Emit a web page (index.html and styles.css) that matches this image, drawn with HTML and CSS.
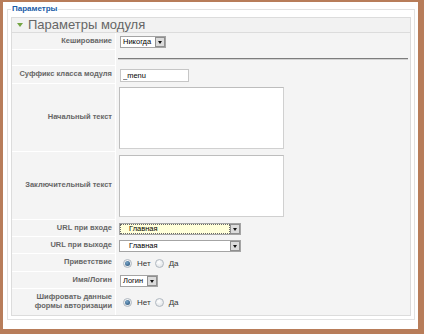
FILE: index.html
```html
<!DOCTYPE html>
<html lang="ru">
<head>
    <meta charset="UTF-8">
    <title>Параметры</title>
    <link rel="stylesheet" href="styles.css">
</head>
<body>
    <div class="frame">
        <fieldset class="params">
            <legend>Параметры</legend>
            <div class="pane">
                <h3 class="pane-title"><span class="toggler"></span>Параметры модуля</h3>
                <div class="paramlist">
                    <div class="param">
                        <div class="key">Кеширование</div>
                        <div class="value">
                            <div class="select select-cache"><span class="select-text">Никогда</span><span class="select-btn"></span></div>
                        </div>
                    </div>
                    <div class="param">
                        <div class="key"></div>
                        <div class="value"><hr class="spacer"></div>
                    </div>
                    <div class="param">
                        <div class="key">Суффикс класса модуля</div>
                        <div class="value"><input class="text" type="text" value="_menu"></div>
                    </div>
                    <div class="param">
                        <div class="key">Начальный текст</div>
                        <div class="value"><textarea class="area"></textarea></div>
                    </div>
                    <div class="param">
                        <div class="key">Заключительный текст</div>
                        <div class="value"><textarea class="area"></textarea></div>
                    </div>
                    <div class="param">
                        <div class="key">URL при входе</div>
                        <div class="value">
                            <div class="select select-wide select-focus"><span class="select-text">Главная</span><span class="select-btn"></span></div>
                        </div>
                    </div>
                    <div class="param">
                        <div class="key">URL при выходе</div>
                        <div class="value">
                            <div class="select select-wide"><span class="select-text">Главная</span><span class="select-btn"></span></div>
                        </div>
                    </div>
                    <div class="param">
                        <div class="key">Приветствие</div>
                        <div class="value">
                            <span class="radio checked"></span><span class="radio-label">Нет</span>
                            <span class="radio"></span><span class="radio-label">Да</span>
                        </div>
                    </div>
                    <div class="param">
                        <div class="key">Имя/Логин</div>
                        <div class="value">
                            <div class="select select-login"><span class="select-text">Логин</span><span class="select-btn"></span></div>
                        </div>
                    </div>
                    <div class="param last">
                        <div class="key">Шифровать данные<br>формы авторизации</div>
                        <div class="value">
                            <span class="radio checked"></span><span class="radio-label">Нет</span>
                            <span class="radio"></span><span class="radio-label">Да</span>
                        </div>
                    </div>
                </div>
            </div>
        </fieldset>
    </div>
</body>
</html>
```

FILE: styles.css
```css
body {
    margin: 0;
    font-family: "Liberation Sans", Arial, sans-serif;
}
.frame {
    height: 334px;
    box-sizing: border-box;
    border-style: solid;
    border-color: #b87d5a;
    border-width: 2px 6px 5px 3px;
    background-color: #fff;
    padding: 2px 3px 0 4px;
}
.params {
    margin: 0;
    padding: 3px;
    border: 1px solid #e2e2e2;
    min-width: 0;
}
.params legend {
    padding: 0 1px;
    font-size: 8px;
    line-height: 10px;
    font-weight: bold;
    color: #1a5ca8;
}
.pane {
    border: 1px solid #dcdcdc;
    background-color: #f4f4f4;
}
.pane-title {
    margin: 0;
    height: 14px;
    padding-left: 5px;
    font-size: 13px;
    line-height: 14px;
    font-weight: normal;
    color: #666;
    background-color: #f2f2f2;
    border-bottom: 1px solid #dcdcdc;
}
.toggler {
    display: inline-block;
    vertical-align: middle;
    margin: -2px 5px 0 0;
    border-left: 3px solid transparent;
    border-right: 3px solid transparent;
    border-top: 4px solid #74a543;
}
.param {
    display: flex;
}
.key {
    flex: none;
    width: 104px;
    box-sizing: border-box;
    padding: 0 3px;
    display: flex;
    align-items: center;
    justify-content: flex-end;
    text-align: right;
    font-size: 7.5px;
    line-height: 8.5px;
    font-weight: bold;
    color: #666;
    border-right: 1px solid #fff;
    border-bottom: 1px solid #fff;
}
.param.last .key {
    border-bottom: none;
    padding-top: 4px;
    padding-bottom: 5px;
}
.value {
    flex: 1;
    display: flex;
    align-items: center;
    min-height: 11px;
    padding: 3px 2px 2px 3px;
    font-size: 8px;
    color: #333;
}
.spacer {
    flex: 1;
    margin: 0 0 0 -1px;
    border: none;
    border-top: 1px solid #7d7d7d;
    border-bottom: 1px solid #d2d2d2;
}
.text {
    width: 69px;
    height: 13px;
    box-sizing: border-box;
    margin: 0 0 0 1px;
    padding: 0 2px;
    border: 1px solid #c6c6c6;
    font-family: "Liberation Sans", Arial, sans-serif;
    font-size: 7.5px;
    color: #000;
}
.area {
    display: block;
    width: 165px;
    height: 62px;
    box-sizing: border-box;
    margin: 0 0 1px;
    border: 1px solid #d0d0d0;
    border-top-color: #bdbdbd;
    border-left-color: #bdbdbd;
    resize: none;
    background-color: #fff;
}
.select {
    display: inline-flex;
    height: 12px;
    box-sizing: border-box;
    border: 1px solid #a4a4a4;
    background-color: #fff;
    font-size: 7.5px;
    line-height: 10px;
    color: #000;
}
.select-cache {
    width: 46px;
    margin-left: 1px;
}
.select-login {
    width: 38px;
    margin-left: 1px;
}
.select-wide {
    width: 122px;
}
.select-text {
    flex: 1;
    padding-left: 2px;
}
.select-wide .select-text {
    padding-left: 9px;
}
.select-focus .select-text {
    background-color: #ffffd9;
    outline: 1px dotted #666;
    outline-offset: -1px;
}
.select-btn {
    flex: none;
    width: 10px;
    margin: 0;
    box-sizing: border-box;
    border: 1px solid #8f8f8f;
    background-color: #dcdcdc;
    display: flex;
    align-items: center;
    justify-content: center;
}
.select-btn::after {
    content: "";
    border-left: 2.5px solid transparent;
    border-right: 2.5px solid transparent;
    border-top: 3px solid #111;
}
.radio {
    flex: none;
    width: 9px;
    height: 9px;
    box-sizing: border-box;
    margin-left: 4px;
    border: 1px solid #b0b8c0;
    border-radius: 50%;
    background: radial-gradient(circle at 40% 35%, #fff, #d9dde1);
    display: flex;
    align-items: center;
    justify-content: center;
}
.radio.checked::after {
    content: "";
    width: 5px;
    height: 5px;
    border-radius: 50%;
    background: radial-gradient(circle at 40% 35%, #7aa6c9, #1e4a72);
}
.radio-label {
    margin-left: 5px;
    line-height: 13px;
}
```
